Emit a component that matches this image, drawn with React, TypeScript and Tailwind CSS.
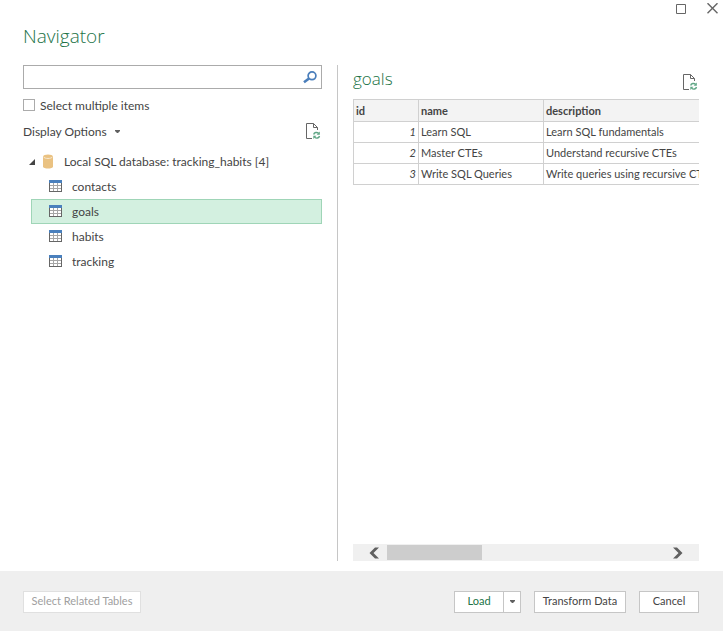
import { useState } from 'react';

const TABLES = ['contacts', 'goals', 'habits', 'tracking'];

const ROWS = [
  { id: 1, name: 'Learn SQL', description: 'Learn SQL fundamentals' },
  { id: 2, name: 'Master CTEs', description: 'Understand recursive CTEs' },
  { id: 3, name: 'Write SQL Queries', description: 'Write queries using recursive CTEs' },
];

function RefreshPageIcon() {
  return (
    <svg width="15" height="17" viewBox="0 0 15 17" fill="none" aria-hidden="true">
      <path d="M6 15.5H.5V.5H7.500L11.500 4.500V7" stroke="#666" />
      <path d="M7.500 .5V4.500H11.500" stroke="#666" />
      <path d="M7.700 11.500C8.200 9.300 11 8.800 12.600 10.300" stroke="#5fa685" strokeWidth="1.400" />
      <path d="M13.800 8.600V11.700H10.700Z" fill="#5fa685" />
      <path d="M13.500 13C13 15.300 10.200 15.700 8.600 14.200" stroke="#5fa685" strokeWidth="1.400" />
      <path d="M7.300 15.900V12.800H10.400Z" fill="#5fa685" />
    </svg>
  );
}

function SearchIcon() {
  return (
    <svg width="14" height="13" viewBox="0 0 14 13" fill="none" aria-hidden="true">
      <circle cx="9" cy="4.800" r="3.900" stroke="#4a7ebb" strokeWidth="1.700" />
      <path d="M6 7.500L1 11.300" stroke="#4a7ebb" strokeWidth="2.600" />
    </svg>
  );
}

function TableIcon() {
  return (
    <svg className="mb-px" width="13" height="12" viewBox="0 0 13 12" shapeRendering="crispEdges" aria-hidden="true">
      <path d="M0 3H13V12H0Z" fill="#666" />
      <path d="M1 3H12V11H1Z" fill="#fff" />
      <path d="M4 3H5V11H4ZM8 3H9V11H8ZM1 5H12V6H1ZM1 8H12V9H1Z" fill="#a6a6a6" />
      <path d="M0 0H13V3H0Z" fill="#4a80bd" />
    </svg>
  );
}

function DatabaseIcon() {
  return (
    <svg width="10" height="15" viewBox="0 0 10 15" aria-hidden="true">
      <path d="M0 2.500C0 -.3 10 -.3 10 2.500V12.500C10 15.300 0 15.300 0 12.500Z" fill="#eac282" />
      <path d="M.5 2.800C1.500 5 8.500 5 9.500 2.800" fill="none" stroke="#f8ead2" />
    </svg>
  );
}

function Caret() {
  return (
    <svg width="5" height="3" viewBox="0 0 5 3" aria-hidden="true">
      <path d="M0 0H5V1L3 3H2L0 1Z" fill="#606060" />
    </svg>
  );
}

function Chevron({ right = false }: { right?: boolean }) {
  return (
    <svg width="10" height="12" viewBox="0 0 10 12" aria-hidden="true">
      {right ? (
        <path d="M0 .5H4L9.500 6L4 11.500H0L5.500 6Z" fill="#606060" />
      ) : (
        <path d="M10 .5H6L.5 6L6 11.500H10L4.500 6Z" fill="#606060" />
      )}
    </svg>
  );
}

export default function App() {
  const [selected, setSelected] = useState('goals');
  const [multiple, setMultiple] = useState(false);

  return (
    <div className="flex h-screen flex-col bg-white font-['Lato','Open_Sans',sans-serif] text-[12px] text-[#444]">
      <header className="flex h-[65px] items-start justify-between pr-1 pl-[23px]">
        <h1 className="pt-[22px] font-['Open_Sans',sans-serif] text-[19px] leading-7 font-light text-[#217346]">Navigator</h1>
        <div className="flex gap-[21px] pt-[3px]">
          <button type="button" aria-label="Maximize">
            <svg width="10" height="10" viewBox="0 0 10 10" aria-hidden="true">
              <path d="M.5 .5H9.500V9.500H.5Z" fill="none" stroke="#666" />
            </svg>
          </button>
          <button type="button" aria-label="Close">
            <svg width="12" height="11" viewBox="0 0 12 11" aria-hidden="true">
              <path d="M.5 .2L10.500 10.200M10.500 .2L.5 10.200" fill="none" stroke="#666" strokeWidth="1.400" />
            </svg>
          </button>
        </div>
      </header>

      <main className="flex min-h-0 flex-1 pr-6 pb-[10px] pl-[23px]">
        <section className="w-[315px] shrink-0 border-r border-[#c6c6c6] pr-[15px]">
          <div className="flex h-6 items-center border border-[#ababab] pr-1">
            <input type="text" aria-label="Search" className="h-full min-w-0 flex-1 px-1 outline-none" />
            <button type="button" aria-label="Run search">
              <SearchIcon />
            </button>
          </div>
          <label className="mt-2 flex h-4 items-center gap-[5px]">
            <input
              type="checkbox"
              checked={multiple}
              onChange={(e) => setMultiple(e.target.checked)}
              className="size-3 appearance-none border border-[#ababab] bg-white checked:bg-[#217346]"
            />
            <span className="pt-px">Select multiple items</span>
          </label>
          <div className="mt-2 flex h-5 items-center justify-between pr-px">
            <button type="button" className="flex items-center gap-2 pt-px">
              Display Options
              <Caret />
            </button>
            <button type="button" aria-label="Refresh">
              <RefreshPageIcon />
            </button>
          </div>

          <div className="mt-2 pl-[6px]">
            <div className="flex h-[25px] items-center">
              <button type="button" aria-label="Collapse" className="mr-2">
                <svg width="6" height="6" viewBox="0 0 6 6" aria-hidden="true">
                  <path d="M6 0V6H0Z" fill="#444" />
                </svg>
              </button>
              <DatabaseIcon />
              <span className="ml-[11px] whitespace-nowrap">Local SQL database: tracking_habits [4]</span>
            </div>
            <ul className="pl-[2px]">
              {TABLES.map((name) => (
                <li key={name}>
                  <button
                    type="button"
                    onClick={() => setSelected(name)}
                    className={
                      name === selected
                        ? 'flex h-[25px] w-full items-center gap-[10px] border border-[#9fd5b7] bg-[#d3f0e0] pl-[17px]'
                        : 'flex h-[25px] w-full items-center gap-[10px] border border-transparent pl-[17px]'
                    }
                  >
                    <TableIcon />
                    {name}
                  </button>
                </li>
              ))}
            </ul>
          </div>
        </section>

        <section className="flex min-w-0 flex-1 flex-col pl-[15px]">
          <div className="flex h-[34px] items-start justify-between pr-px">
            <h2 className="font-['Open_Sans',sans-serif] text-[17px] leading-7 font-light text-[#217346]">goals</h2>
            <button type="button" aria-label="Refresh preview" className="pt-[9px]">
              <RefreshPageIcon />
            </button>
          </div>
          <div className="min-h-0 flex-1 overflow-hidden">
            <table className="w-[420px] table-fixed border-collapse text-left text-[11px] leading-4 whitespace-nowrap">
              <thead>
                <tr className="h-[22px] bg-[#f3f3f3]">
                  <th className="w-[65px] border border-[#d0d0d0] px-[2px]">id</th>
                  <th className="w-[125px] border border-[#d0d0d0] px-[2px]">name</th>
                  <th className="border border-[#d0d0d0] px-[2px]">description</th>
                </tr>
              </thead>
              <tbody>
                {ROWS.map((row) => (
                  <tr key={row.id} className="h-[21px]">
                    <td className="border border-[#d0d0d0] px-[2px] text-right italic">{row.id}</td>
                    <td className="border border-[#d0d0d0] px-[2px]">{row.name}</td>
                    <td className="border border-[#d0d0d0] px-[2px]">{row.description}</td>
                  </tr>
                ))}
              </tbody>
            </table>
          </div>
          <div className="flex h-[17px] items-center bg-[#f0f0f0] px-4">
            <button type="button" aria-label="Scroll left">
              <Chevron />
            </button>
            <div className="mx-2 flex-1">
              <div className="h-[15px] w-[95px] bg-[#cdcdcd]" />
            </div>
            <button type="button" aria-label="Scroll right">
              <Chevron right />
            </button>
          </div>
        </section>
      </main>

      <footer className="flex h-[60px] items-center justify-between bg-[#efefef] pt-px pr-6 pl-[23px] text-[11px]">
        <button type="button" disabled className="h-[22px] w-[118px] border border-[#e0e0e0] bg-white whitespace-nowrap text-[#a0a0a0]">
          Select Related Tables
        </button>
        <div className="flex gap-[13px]">
          <div className="flex h-[22px] border border-[#c6c6c6] bg-white">
            <button type="button" className="w-12 text-[#217346]">
              Load
            </button>
            <button type="button" aria-label="Load options" className="flex w-[17px] items-center justify-center border-l border-[#c6c6c6]">
              <Caret />
            </button>
          </div>
          <button type="button" className="h-[22px] w-[92px] border border-[#c6c6c6] bg-white whitespace-nowrap">
            Transform Data
          </button>
          <button type="button" className="h-[22px] w-[60px] border border-[#c6c6c6] bg-white">
            Cancel
          </button>
        </div>
      </footer>
    </div>
  );
}
